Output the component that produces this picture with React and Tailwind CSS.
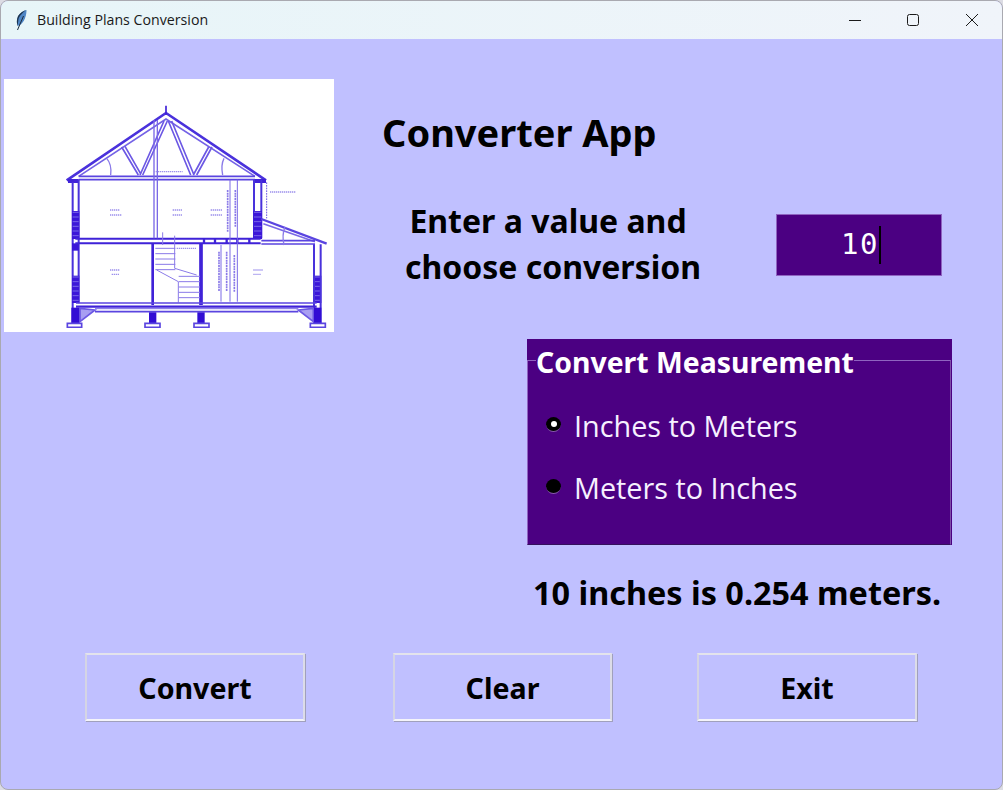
function HouseDrawing() {
  // drawn in the reference's 3x crop coordinates, viewBox maps it back down
  const brick = [];
  for (let y = 412; y < 490; y += 14) brick.push(y);
  const lowBrick = [];
  for (let y = 606; y < 680; y += 14) lowBrick.push(y);
  const steps = [520, 536, 552, 568, 584];
  const lowSteps = [604, 620, 636, 652, 668];
  const marks = [
    [330, 405, 30], [330, 420, 34], [518, 405, 30], [518, 420, 30], [632, 405, 36], [632, 420, 36],
    [330, 585, 30], [335, 598, 24], [760, 585, 30], [760, 598, 24], [462, 290, 86], [810, 351, 78], [530, 520, 60],
  ];
  const vmarks = [
    [683, 345, 125], [706, 345, 110], [657, 530, 120], [680, 530, 120], [703, 540, 110],
  ];

  return (
    <svg viewBox="12 12 990 759" className="block h-[253px] w-[330px] bg-white">
      <defs>
        <filter id="soft" x="0" y="0" width="100%" height="100%">
          <feGaussianBlur stdDeviation="1.9" />
        </filter>
      </defs>
      <g filter="url(#soft)" fill="none" stroke="#3f22d8" strokeWidth="5">
        {/* roof */}
        <path d="M200 316 L498 114 L798 316" strokeWidth="8" stroke="#4a30dc" />
        <path d="M236 304 L498 132 L765 304" stroke="#7462e6" strokeWidth="5" />
        <path d="M498 92 V120" />
        <path d="M365 216 L415 300 M375 214 L423 298 M492 138 L420 300 M502 138 L428 300" stroke="#6c58e4" strokeWidth="5" />
        <path d="M505 138 L572 300 M515 138 L582 300 M626 216 L580 300 M636 216 L590 300" stroke="#6c58e4" strokeWidth="5" />
        <path d="M320 250 Q336 268 332 300 M672 250 Q662 270 668 300" stroke="#8a7ae8" strokeWidth="4" />
        {/* ceiling */}
        <path d="M236 304 H765 M236 314 H765" stroke="#5a44e0" strokeWidth="5" />
        {/* eaves */}
        <path d="M204 318 H236 M764 318 H798" strokeWidth="12" />
        {/* outer upper walls */}
        <path d="M218 322 V745 M236 314 V685 M762 314 V490 M784 314 V490" stroke="#4a30dc" strokeWidth="6" />
        <rect x="216" y="408" width="22" height="84" fill="#3a18d8" stroke="none" />
        <rect x="760" y="408" width="26" height="84" fill="#3a18d8" stroke="none" />
        <rect x="216" y="602" width="22" height="82" fill="#3a18d8" stroke="none" />
        <rect x="940" y="602" width="24" height="82" fill="#3a18d8" stroke="none" />
        <rect x="216" y="505" width="20" height="22" fill="#3a18d8" stroke="none" />
        {brick.map((y) => (
          <path key={y} d={`M218 ${y} H236 M762 ${y} H784`} stroke="#9a8ef0" strokeWidth="2" />
        ))}
        {lowBrick.map((y) => (
          <path key={y} d={`M218 ${y} H236 M942 ${y} H962`} stroke="#9a8ef0" strokeWidth="2" />
        ))}
        {/* middle floor */}
        <path d="M226 491 H782 M226 505 H782" stroke="#3f22d8" strokeWidth="6" />
        <path d="M612 491 V505 M645 491 V505 M680 491 V505 M712 491 V505 M748 491 V505" strokeWidth="7" />
        {/* lean-to */}
        <path d="M784 432 L980 506" strokeWidth="7" stroke="#5a44e0" />
        <path d="M790 446 L945 500" stroke="#7a68e6" />
        <path d="M784 497 H945 M784 507 H945" stroke="#5a44e0" />
        <path d="M942 508 V745 M962 508 V745" stroke="#4a30dc" strokeWidth="6" />
        <path d="M855 455 Q845 480 852 510" stroke="#8a7ae8" strokeWidth="4" />
        <path d="M800 322 V430" stroke="#6c58e4" strokeWidth="3" strokeDasharray="5 3" />
        {/* inner walls */}
        <path d="M458 505 V690" strokeWidth="8" />
        <path d="M603 505 V690" strokeWidth="11" />
        <path d="M462 135 V490 M472 135 V490" stroke="#7a68e6" strokeWidth="4" />
        <path d="M690 314 V680 M712 314 V680 M663 510 V680" stroke="#7a68e6" strokeWidth="3" />
        {/* stairs */}
        <path d="M488 472 V510 M524 482 V580 L590 600 M470 585 L535 620 V682" stroke="#8a7ae8" strokeWidth="3" />
        {steps.map((y) => (
          <path key={y} d={`M466 ${y} H526`} stroke="#8a7ae8" strokeWidth="3" />
        ))}
        {lowSteps.map((y) => (
          <path key={y} d={`M536 ${y} H600`} stroke="#8a7ae8" strokeWidth="3" />
        ))}
        {/* ground slab */}
        <path d="M228 684 H950" stroke="#5a44e0" />
        <path d="M228 695 H950" strokeWidth="7" />
        <path d="M285 710 H895" stroke="#5a44e0" />
        <path d="M285 701 H895" stroke="#7a68e6" strokeWidth="3" />
        <path d="M240 700 L285 705 L240 740 Z M940 700 L895 705 L940 740 Z" stroke="#6c58e4" fill="#a89ef2" />
        {/* foundations */}
        <rect x="214" y="698" width="24" height="46" fill="#3010d4" stroke="none" />
        <rect x="942" y="698" width="22" height="46" fill="#3010d4" stroke="none" />
        <rect x="447" y="712" width="22" height="32" fill="#3010d4" stroke="none" />
        <rect x="592" y="712" width="22" height="32" fill="#3010d4" stroke="none" />
        <path d="M202 745 H245 V757 H202 Z M435 745 H480 V757 H435 Z M582 745 H627 V757 H582 Z M931 745 H976 V757 H931 Z" stroke="#5a44e0" />
        {/* dimension scribbles */}
        {marks.map(([x, y, w]) => (
          <path key={`${x}-${y}`} d={`M${x} ${y} h${w}`} stroke="#9c90ec" strokeWidth="4" strokeDasharray="4 2" />
        ))}
        {vmarks.map(([x, y, h]) => (
          <path key={`${x}-${y}`} d={`M${x} ${y} v${h}`} stroke="#8a7ae8" strokeWidth="5" strokeDasharray="6 2" />
        ))}
      </g>
    </svg>
  );
}

function Feather() {
  return (
    <svg viewBox="0 0 11 20" className="h-5 w-[11px]">
      <path d="M10.5 0 C5 1 1 6 .8 12 L1.5 16 C6.5 15 10.5 8 10.5 0 Z" fill="#4f86c6" />
      <path d="M10.5 0 C7 2 3.5 6 2.5 9 L1.5 16 C.6 13 .6 9 2 6 C4 3 7 1 10.5 0 Z" fill="#1d3550" />
      <path d="M1.5 20 L7.5 6" stroke="#1b2a3c" strokeWidth="1" fill="none" />
    </svg>
  );
}

function TitleBar() {
  return (
    <div className="flex h-[38px] shrink-0 items-center bg-gradient-to-r from-[#e7f5f8] to-[#f0f4fa]">
      <div className="ml-[15px] w-[21px]">
        <Feather />
      </div>
      <span className="font-['Open_Sans'] text-[14.2px] text-[#1a1a1a]">Building Plans Conversion</span>
      <div className="ml-auto flex">
        <button className="flex h-[38px] w-[58px] items-center justify-center">
          <svg viewBox="0 0 12 12" className="h-3 w-3" fill="none" stroke="#1a1a1a" strokeWidth="1">
            <path d="M0 6.5 H12" />
          </svg>
        </button>
        <button className="mr-[1px] flex h-[38px] w-[58px] items-center justify-center">
          <svg viewBox="0 0 12 12" className="h-3 w-3" fill="none" stroke="#1a1a1a" strokeWidth="1">
            <rect x="0.5" y="0.5" width="11" height="11" rx="2" />
          </svg>
        </button>
        <button className="mr-[1px] flex h-[38px] w-[58px] items-center justify-center">
          <svg viewBox="0 0 12 12" className="h-3 w-3" fill="none" stroke="#1a1a1a" strokeWidth="1">
            <path d="M0 0 L12 12 M12 0 L0 12" />
          </svg>
        </button>
      </div>
    </div>
  );
}

function Radio({ checked, label }) {
  return (
    <label className="flex items-center">
      <span className="relative mt-[-3px] ml-[1px] flex h-[15px] w-[15px] items-center justify-center rounded-full border-b border-b-[#8a5ab0] bg-black">
        {checked && <span className="h-[6px] w-[6px] rounded-full bg-white" />}
      </span>
      <span className="ml-[13px] font-['Open_Sans'] text-[28.8px] leading-[38px] font-normal text-[#f6f0ff]">{label}</span>
    </label>
  );
}

function ActionButton({ children, className }) {
  return (
    <button className={`flex h-[68px] items-center justify-center border-2 border-t-[#e3e3ec] border-r-[#dcdce8] border-b-[#f4f4fa] border-l-[#d5d5e4] pt-[3px] font-['Noto_Sans'] text-[28.6px] font-bold text-black shadow-[1px_1px_0_#a0a0bc] ${className}`}>
      {children}
    </button>
  );
}

export default function App() {
  return (
    <div className="h-[790px] w-[1003px] bg-[#dcdce4]">
      <div className="flex h-full flex-col overflow-hidden rounded-[8px] border border-[#a9a9b0] bg-[#c0c0ff]">
        <TitleBar />

        <div className="mt-[40px] flex">
          <div className="ml-[3px]">
            <HouseDrawing />
          </div>
          <div className="ml-[47px] flex-1">
            <h1 className="mt-[28px] ml-[1px] font-['Noto_Sans'] text-[38px] leading-[50px] font-bold text-black">Converter App</h1>
            <div className="mt-[41px] flex items-center">
              <p className="w-[344px] text-center font-['Noto_Sans'] text-[32px] leading-[46px] font-bold text-black">
                <span className="block pr-[10px]">Enter a value and</span>
                <span className="block">choose conversion</span>
              </p>
              <div className="mt-[1px] ml-[51px] flex h-[62px] w-[166px] items-center border border-[#8f64c0] bg-[#4b0082] pl-[64px]">
                <span className="font-['DejaVu_Sans_Mono'] text-[29px] leading-none tracking-[1.5px] text-white">10</span>
                <span className="h-[38px] w-[2px] bg-black" />
              </div>
            </div>
          </div>
        </div>

        <div className="mt-[7px] ml-[526px] w-[425px]">
          <div className="relative h-[206px] bg-[#4b0082]">
            <div className="absolute top-[21px] right-[1px] bottom-0 left-0 border border-t-[#8f64c0] border-r-[#7d50a8] border-b-[#35105c] border-l-[#8f64c0]" />
            <div className="relative flex flex-col pl-[18px]">
              <span className="-ml-[9px] w-fit bg-[#4b0082] font-['Noto_Sans'] text-[28.4px] leading-[46px] font-bold text-white">Convert Measurement</span>
              <div className="mt-[22px] flex flex-col gap-[24px]">
                <Radio checked label="Inches to Meters" />
                <Radio label="Meters to Inches" />
              </div>
            </div>
          </div>
          <p className="mt-[25px] ml-[6px] font-['Noto_Sans'] text-[32.4px] leading-[44px] font-bold whitespace-nowrap text-black">10 inches is 0.254 meters.</p>
        </div>

        <div className="mt-[39px] ml-[84px] flex">
          <ActionButton className="w-[220px]">Convert</ActionButton>
          <ActionButton className="ml-[88px] w-[219px]">Clear</ActionButton>
          <ActionButton className="ml-[85px] w-[220px]">Exit</ActionButton>
        </div>
      </div>
    </div>
  );
}
